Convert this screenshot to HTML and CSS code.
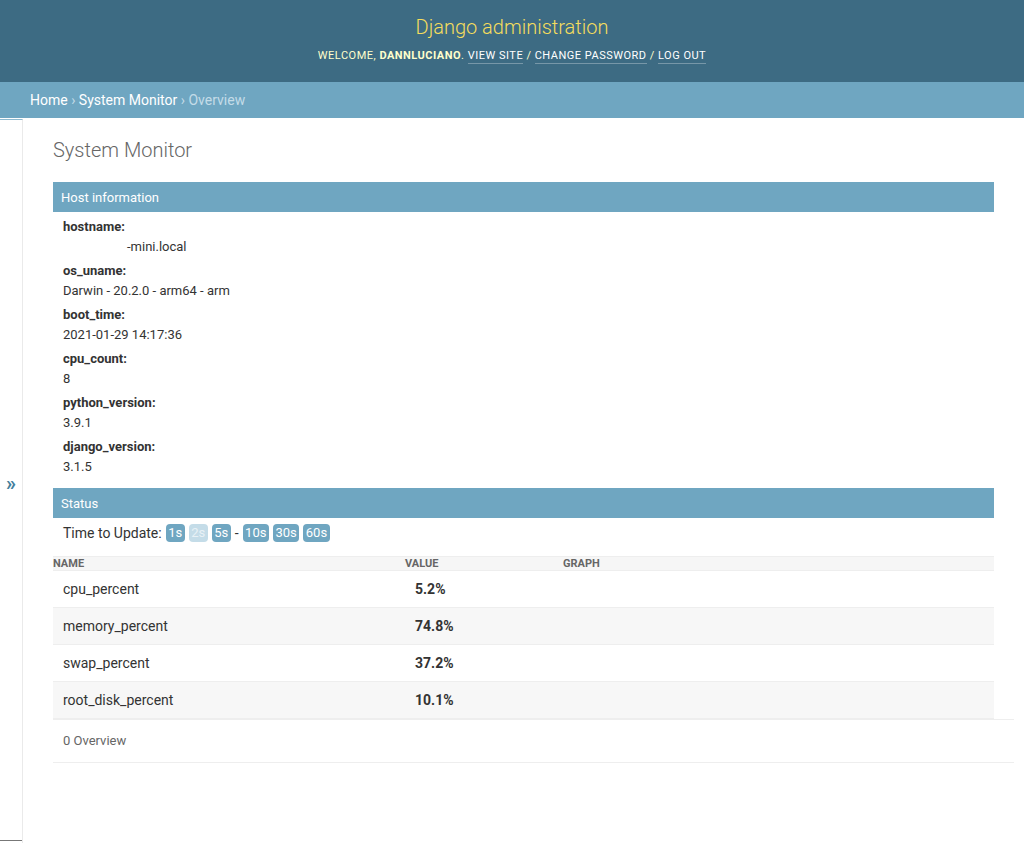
FILE: index.html
```html
<!DOCTYPE html>
<html lang="en">
<head>
<meta charset="utf-8">
<title>Overview | Django site admin</title>
<link rel="stylesheet" href="styles.css">
</head>
<body>
<div class="page">
  <header class="header">
    <h1 class="branding">Django administration</h1>
    <div class="user-tools">
      Welcome, <strong>dannluciano</strong>.
      <a href="#">View site</a> /
      <a href="#">Change password</a> /
      <a href="#">Log out</a>
    </div>
  </header>
  <nav class="breadcrumbs">
    <a href="#">Home</a> › <a href="#">System Monitor</a> › <span class="current">Overview</span>
  </nav>
  <div class="main">
    <div class="sidebar-toggle"><span class="toggle-glyph">»</span></div>
    <main class="content">
      <h1 class="page-title">System Monitor</h1>

      <section class="module">
        <h2 class="caption">Host information</h2>
        <dl class="info">
          <dt>hostname:</dt>
          <dd><span class="redacted"></span>-mini.local</dd>
          <dt>os_uname:</dt>
          <dd>Darwin - 20.2.0 - arm64 - arm</dd>
          <dt>boot_time:</dt>
          <dd>2021-01-29 14:17:36</dd>
          <dt>cpu_count:</dt>
          <dd>8</dd>
          <dt>python_version:</dt>
          <dd>3.9.1</dd>
          <dt>django_version:</dt>
          <dd>3.1.5</dd>
        </dl>
      </section>

      <section class="module">
        <h2 class="caption">Status</h2>
        <div class="update-row">
          <span>Time to Update:</span>
          <a class="badge" href="#">1s</a>
          <a class="badge badge-active" href="#">2s</a>
          <a class="badge" href="#">5s</a>
          <span>-</span>
          <a class="badge" href="#">10s</a>
          <a class="badge" href="#">30s</a>
          <a class="badge" href="#">60s</a>
        </div>
        <table class="status-table">
          <thead>
            <tr><th class="col-name">Name</th><th class="col-value">Value</th><th class="col-graph">Graph</th></tr>
          </thead>
          <tbody>
            <tr><td>cpu_percent</td><td class="val">5.2%</td><td></td></tr>
            <tr class="alt"><td>memory_percent</td><td class="val">74.8%</td><td></td></tr>
            <tr><td>swap_percent</td><td class="val">37.2%</td><td></td></tr>
            <tr class="alt"><td>root_disk_percent</td><td class="val">10.1%</td><td></td></tr>
          </tbody>
        </table>
        <p class="paginator">0 Overview</p>
      </section>
    </main>
  </div>
</div>
</body>
</html>
```

FILE: styles.css
```css
html, body {
  margin: 0;
  padding: 0;
}
body {
  font-family: Roboto, "Liberation Sans", sans-serif;
  color: #333;
  background: #fff;
  font-size: 14px;
}
.page {
  min-height: 100vh;
  display: flex;
  flex-direction: column;
}
.header {
  background: #3d6b83;
  padding: 12px 30px 16px;
  text-align: center;
}
.branding {
  margin: 0 0 4px;
  font-size: 20px;
  line-height: 30px;
  font-weight: 300;
  color: #f5dd5d;
}
.user-tools {
  font-size: 11px;
  line-height: 20px;
  letter-spacing: 0.5px;
  text-transform: uppercase;
  color: #ffc;
}
.user-tools strong {
  font-weight: 700;
}
.user-tools a {
  color: #fff;
  text-decoration: none;
  border-bottom: 1px solid rgba(255, 255, 255, 0.3);
  padding-bottom: 1px;
}
.breadcrumbs {
  background: #6fa6c1;
  padding: 10px 30px;
  line-height: 16px;
  font-size: 14px;
  color: #c4dce8;
}
.breadcrumbs a {
  color: #fff;
  text-decoration: none;
}
.breadcrumbs .current {
  color: #c4dce8;
}
.main {
  flex: 1;
  display: flex;
}
.sidebar-toggle {
  flex: 0 0 23px;
  border-right: 1px solid #eaeaea;
  border-top: 1px solid #8db9cf;
  margin-top: 1px;
  display: flex;
  flex-direction: column;
  align-items: center;
  padding-top: 351px;
  box-sizing: border-box;
  position: relative;
}
.sidebar-toggle::after {
  content: "";
  position: absolute;
  left: 0;
  right: 0;
  bottom: 2px;
  border-bottom: 1px solid #777;
}
.toggle-glyph {
  font-size: 20px;
  line-height: 24px;
  font-weight: 700;
  color: #447e9b;
}
.content {
  flex: 1;
  padding: 20px 30px;
  min-width: 0;
}
.page-title {
  margin: 0 0 20px;
  font-size: 20px;
  line-height: 24px;
  font-weight: 300;
  color: #666;
}
.module {
  margin: 0;
}
.caption {
  margin: 0;
  background: #6fa6c1;
  color: #fff;
  font-size: 13px;
  line-height: 14px;
  font-weight: 400;
  padding: 9px 8px 7px;
}
.info {
  margin: 0;
  padding: 5px 10px 11px;
  font-size: 13px;
}
.info dt {
  font-weight: 700;
  line-height: 20px;
}
.info dd {
  margin: 0 0 4px;
  line-height: 20px;
}
.info dd:last-child {
  margin-bottom: 0;
}
.redacted {
  display: inline-block;
  width: 64px;
}
.update-row {
  display: flex;
  align-items: center;
  gap: 4px;
  margin: 5px 0 13px;
  padding-left: 10px;
  font-size: 14px;
  line-height: 20px;
}
.badge {
  background: #6fa6c1;
  color: #fff;
  text-decoration: none;
  font-size: 13px;
  line-height: 18px;
  padding: 0 2.5px;
  border-radius: 4px;
}
.badge-active {
  background: #c4dce8;
  color: #e8f1f6;
}
.status-table {
  width: 100%;
  border-collapse: collapse;
  table-layout: fixed;
}
.status-table th {
  text-align: left;
  font-size: 11px;
  line-height: 13px;
  font-weight: 700;
  text-transform: uppercase;
  color: #666;
  background: #f6f6f6;
  border-top: 1px solid #eee;
  border-bottom: 1px solid #eee;
  padding: 0;
}
.col-name { width: 352px; }
.col-value { width: 158px; }
.status-table td {
  padding: 10px;
  font-size: 14px;
  line-height: 16px;
  border-bottom: 1px solid #eee;
}
.status-table tr.alt td {
  background: #f7f7f7;
}
.status-table td.val {
  font-weight: 700;
}
.paginator {
  margin: 0 -20px 0 0;
  border-top: 1px solid #eee;
  border-bottom: 1px solid #eee;
  padding: 10px;
  font-size: 13px;
  line-height: 22px;
  color: #666;
}
```
